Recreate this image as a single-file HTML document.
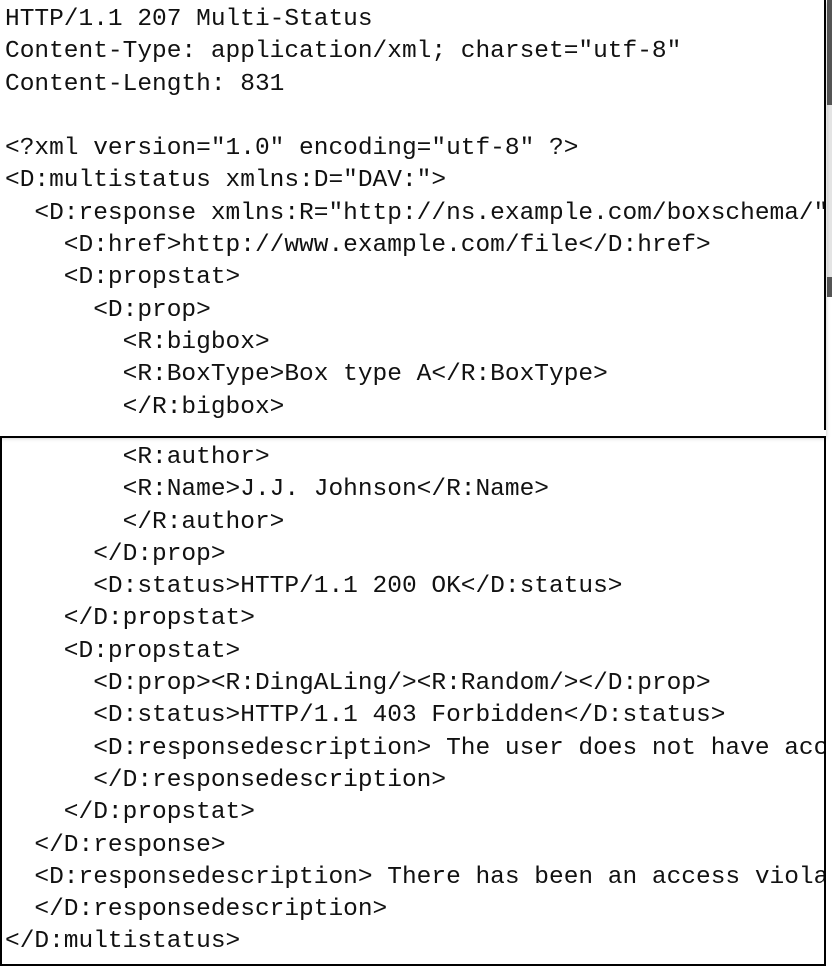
<!DOCTYPE html>
<html><head><meta charset="utf-8"><style>
html,body{margin:0;padding:0;background:#fff;width:832px;height:966px;overflow:hidden;position:relative}
pre{margin:0;font-family:"Liberation Mono","DejaVu Sans Mono",monospace;font-size:24.5px;line-height:32.3px;color:#111;white-space:pre}
#top{position:absolute;left:0;top:0;width:826px;height:436px;background:#fff;box-shadow:0 2px 4px rgba(0,0,0,.25);z-index:2;overflow:hidden}
#top pre{position:absolute;left:5px;top:4px}
#topline{position:absolute;left:824px;top:0;width:2px;height:430px;background:#000;z-index:3}
#bot{position:absolute;left:0;top:436px;width:822px;height:526px;border:2px solid #000;overflow:hidden}
#bot pre{position:absolute;left:3px;top:4px}
.sb{position:absolute;left:827px;width:5px}
</style></head><body>
<div id="top"><pre>HTTP/1.1 207 Multi-Status
Content-Type: application/xml; charset="utf-8"
Content-Length: 831

&lt;?xml version="1.0" encoding="utf-8" ?&gt;
&lt;D:multistatus xmlns:D="DAV:"&gt;
  &lt;D:response xmlns:R="http://ns.example.com/boxschema/"&gt;
    &lt;D:href&gt;http://www.example.com/file&lt;/D:href&gt;
    &lt;D:propstat&gt;
      &lt;D:prop&gt;
        &lt;R:bigbox&gt;
        &lt;R:BoxType&gt;Box type A&lt;/R:BoxType&gt;
        &lt;/R:bigbox&gt;</pre></div>
<div id="topline"></div>
<div class="sb" style="top:0;height:105px;background:#555"></div>
<div class="sb" style="top:105px;height:172px;background:#e4e4e4"></div>
<div class="sb" style="top:277px;height:20px;background:#555"></div>
<div id="bot"><pre>        &lt;R:author&gt;
        &lt;R:Name&gt;J.J. Johnson&lt;/R:Name&gt;
        &lt;/R:author&gt;
      &lt;/D:prop&gt;
      &lt;D:status&gt;HTTP/1.1 200 OK&lt;/D:status&gt;
    &lt;/D:propstat&gt;
    &lt;D:propstat&gt;
      &lt;D:prop&gt;&lt;R:DingALing/&gt;&lt;R:Random/&gt;&lt;/D:prop&gt;
      &lt;D:status&gt;HTTP/1.1 403 Forbidden&lt;/D:status&gt;
      &lt;D:responsedescription&gt; The user does not have access
      &lt;/D:responsedescription&gt;
    &lt;/D:propstat&gt;
  &lt;/D:response&gt;
  &lt;D:responsedescription&gt; There has been an access violation
  &lt;/D:responsedescription&gt;
&lt;/D:multistatus&gt;</pre></div>
</body></html>
